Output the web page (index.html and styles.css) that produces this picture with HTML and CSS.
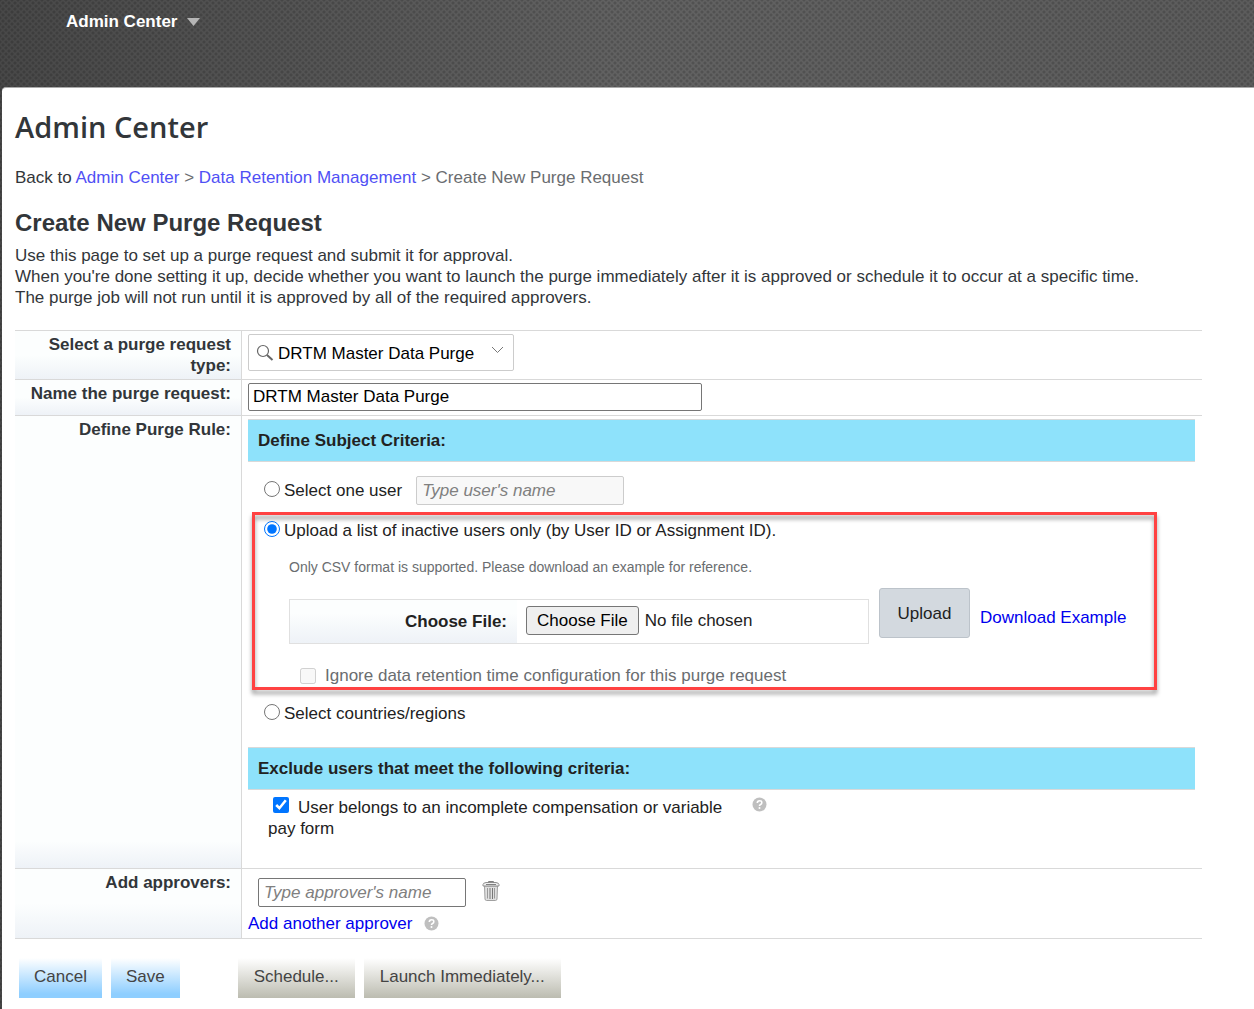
FILE: index.html
```html
<!DOCTYPE html>
<html lang="en">
<head>
<meta charset="utf-8">
<title>Create New Purge Request</title>
<link rel="stylesheet" href="styles.css">
</head>
<body>
<header class="topbar">
  <button type="button" class="module">Admin Center
    <svg width="13" height="8" viewBox="0 0 13 8" aria-hidden="true"><path d="M0 0h13L6.500 8z" fill="#b5b5b5"/></svg>
  </button>
</header>
<main class="panel">
  <h1>Admin Center</h1>
  <nav class="crumbs">Back to <a href="#">Admin Center</a> <span>&gt;</span> <a href="#">Data Retention Management</a> <span>&gt; Create New Purge Request</span></nav>
  <h2>Create New Purge Request</h2>
  <p class="intro">Use this page to set up a purge request and submit it for approval.<br>When you're done setting it up, decide whether you want to launch the purge immediately after it is approved or schedule it to occur at a specific time.<br>The purge job will not run until it is approved by all of the required approvers.</p>

  <form>
    <div class="form-row">
      <label class="caption" for="type">Select a purge request type:</label>
      <div class="field">
        <div class="combo">
          <svg width="18" height="18" viewBox="0 0 18 18" fill="none" stroke="#666" aria-hidden="true"><circle cx="7" cy="7" r="5.500" stroke-width="1.200"/><path d="M11 11l5.500 5" stroke-width="2"/></svg>
          <input id="type" type="text" value="DRTM Master Data Purge">
          <svg class="chevron" width="13" height="8" viewBox="0 0 13 8" fill="none" stroke="#777" aria-hidden="true"><path d="M1 1l5.500 5.500L12 1"/></svg>
        </div>
      </div>
    </div>
    <div class="form-row">
      <label class="caption" for="name">Name the purge request:</label>
      <div class="field"><input id="name" class="text name" type="text" value="DRTM Master Data Purge"></div>
    </div>
    <div class="form-row">
      <div class="caption">Define Purge Rule:</div>
      <div class="field rules">
        <h3>Define Subject Criteria:</h3>
        <div class="subjects">
          <div class="choice one-user">
            <label><input type="radio" name="subject">Select one user</label>
            <input class="text person" type="text" placeholder="Type user's name" aria-label="User's name" disabled>
          </div>
          <div class="upload">
            <div class="highlight"></div>
            <label class="choice"><input type="radio" name="subject" checked>Upload a list of inactive users only (by User ID or Assignment ID).</label>
            <p class="hint">Only CSV format is supported. Please download an example for reference.</p>
            <div class="file-line">
              <div class="file-box">
                <label for="file">Choose File:</label>
                <input id="file" type="file">
              </div>
              <button type="button" class="upload-btn">Upload</button>
              <a href="#">Download Example</a>
            </div>
            <label class="ignore"><input type="checkbox" disabled>Ignore data retention time configuration for this purge request</label>
          </div>
          <label class="choice"><input type="radio" name="subject">Select countries/regions</label>
        </div>
        <h3>Exclude users that meet the following criteria:</h3>
        <div class="exclude">
          <label><input type="checkbox" checked>User belongs to an incomplete compensation or variable pay form</label>
          <svg class="help" width="15" height="15" viewBox="0 0 15 15" aria-label="Help"><circle cx="7.500" cy="7.500" r="7" fill="#bfbfbf"/><path d="M5.300 6q0-2.300 2.300-2.300T9.800 5.700q0 1.200-1.200 1.700T7.500 9" fill="none" stroke="#fff" stroke-width="1.600"/><circle cx="7.500" cy="11" r="1" fill="#fff"/></svg>
        </div>
      </div>
    </div>
    <div class="form-row">
      <label class="caption" for="approver">Add approvers:</label>
      <div class="field approvers">
        <div class="approver-line">
          <input id="approver" class="text person" type="text" placeholder="Type approver's name">
          <button type="button" class="trash" aria-label="Remove approver">
            <svg width="18" height="20" viewBox="0 0 18 20" fill="none"><path d="M2.500 5l.5 13q.2 1.500 1.500 1.500h9q1.300 0 1.500-1.500l.5-13z" fill="#e0e0e0" stroke="#a0a0a0"/><path d="M5.500 7v10.500M12.500 7v10.500" stroke="#999"/><path d="M8 7v11M10.500 7v11" stroke="#777"/><path d="M1 3.500Q1 2 4 1.500h10q3 .5 3 2V5H1z" fill="#eee" stroke="#909090"/><path d="M6.500 1.500V.5h5v1M4 3.500h10" stroke="#808080"/></svg>
          </button>
        </div>
        <div class="add-line">
          <a href="#">Add another approver</a>
          <svg class="help" width="15" height="15" viewBox="0 0 15 15" aria-label="Help"><circle cx="7.500" cy="7.500" r="7" fill="#bfbfbf"/><path d="M5.300 6q0-2.300 2.300-2.300T9.800 5.700q0 1.200-1.200 1.700T7.500 9" fill="none" stroke="#fff" stroke-width="1.600"/><circle cx="7.500" cy="11" r="1" fill="#fff"/></svg>
        </div>
      </div>
    </div>
    <div class="actions">
      <button type="button" class="blue">Cancel</button>
      <button type="button" class="blue">Save</button>
      <button type="button" class="gray first">Schedule...</button>
      <button type="button" class="gray">Launch Immediately...</button>
    </div>
  </form>
</main>
</body>
</html>
```
FILE: styles.css
```css
* { box-sizing: border-box; }
body {
  margin: 0;
  padding-left: 2px;
  min-height: 100vh;
  display: flex;
  flex-direction: column;
  font: 17px/21px "Liberation Sans", Arial, sans-serif;
  color: #32363a;
  background-color: #484848;
  background-image:
    radial-gradient(circle, rgba(0, 0, 0, .16) 1px, transparent 2px),
    radial-gradient(circle, rgba(0, 0, 0, .16) 1px, transparent 2px),
    linear-gradient(90deg, #484848, #626262 50%, #5c5c5c);
  background-size: 6px 6px, 6px 6px, 100% 100%;
  background-position: 0 0, 3px 3px, 0 0;
}
input, button { font: inherit; color: inherit; margin: 0; }
a { color: #00e; text-decoration: none; }
.topbar { height: 87px; padding: 11px 64px; }
.module {
  display: flex;
  align-items: center;
  gap: 10px;
  padding: 0;
  border: 0;
  background: none;
  color: #fff;
  font-weight: 700;
}
.panel {
  flex: 1;
  padding: 22px 52px 11px 13px;
  background: #fff;
  border-top: 1px solid #aaa;
  border-top-left-radius: 4px;
}
h1 { margin: 0; font: 600 29px/34px "Open Sans", sans-serif; }
.crumbs { margin-top: 23px; }
.crumbs a { color: #5050f5; }
.crumbs span { color: #6a6d70; }
h2 { margin: 20px 0 8px; font-size: 24px; line-height: 29px; }
.intro { margin: 0 -40px 22px 0; }

.form-row {
  display: grid;
  grid-template-columns: 227px 1fr;
  border-top: 1px solid #d9d9d9;
}
.caption {
  padding: 3px 10px 3px 0;
  border-right: 1px solid #d9d9d9;
  font-weight: 700;
  text-align: right;
  background: linear-gradient(#fcfefe, #fcfefe 50%, #eef2f7);
}
.form-row:nth-child(3) .caption { background: linear-gradient(#fcfefe, #fcfefe 94%, #eef2f7); }
.field { padding: 3px 7px 4px 6px; min-width: 0; }
.combo {
  display: flex;
  align-items: center;
  width: 266px;
  height: 37px;
  margin-bottom: 4px;
  padding: 0 9px 0 7px;
  border: 1px solid #ccc;
  border-radius: 2px;
  color: #000;
}
.combo input { flex: 1; min-width: 0; padding: 2px 0 0 4px; border: 0; outline: 0; background: none; }
.chevron { margin-bottom: 6px; }
.text {
  display: block;
  height: 29px;
  padding: 0 5px;
  border: 1px solid #767676;
  border-radius: 2px;
  background: #fff;
}
.name { width: 454px; height: 28px; padding: 0 4px; color: #000; }
.person { width: 208px; }
.person::placeholder { color: #808080; font-style: italic; opacity: 1; }
.person:disabled { border-color: #ccc; background: #f8f8f8; }

.rules { color: #222; padding-bottom: 29px; }
h3 {
  margin: 0;
  padding: 10px;
  border: 1px solid #d9d9d9;
  border-width: 1px 0;
  background: #8ee2fb;
  font-size: 17px;
  line-height: 21px;
}
.subjects { padding: 14px 0 23px 16px; }
input[type="radio"], input[type="checkbox"] { width: 16px; height: 16px; }
.choice, .choice label { display: flex; align-items: center; gap: 4px; }
.choice input[type="radio"] { margin-bottom: 3px; }
.one-user { gap: 14px; }
.upload { position: relative; margin: 15px 0 17px; }
.highlight {
  position: absolute;
  inset: -8px 38px -4px -12px;
  border: 3px solid #ff4242;
  filter: drop-shadow(0 4px 2px rgba(0, 0, 0, .4));
  pointer-events: none;
}
.hint { margin: 16px 0 11px 25px; font-size: 14px; line-height: 20px; color: #6a6d70; }
.file-line { display: flex; align-items: flex-start; gap: 10px; margin-left: 25px; }
.file-line a { margin-top: 19px; }
.file-box {
  display: flex;
  width: 580px;
  margin-top: 11px;
  border: 1px solid #e0e0e0;
}
.file-box label {
  width: 227px;
  padding: 11px 10px;
  color: #222;
  font-weight: 700;
  text-align: right;
  background: linear-gradient(#fcfefe, #fcfefe 30%, #eef2f7);
}
.file-box input { flex: 1; min-width: 0; padding: 6px 9px; }
.file-box input::file-selector-button {
  height: 29px;
  margin: 0 6px 0 0;
  padding: 0 10px;
  border: 1px solid #767676;
  border-radius: 3px;
  background: #efefef;
  color: #000;
  font: inherit;
}
.upload-btn {
  width: 91px;
  height: 50px;
  border: 1px solid #bcc3ca;
  border-radius: 3px;
  background: #d3d9df;
}
.ignore { display: flex; align-items: center; gap: 9px; margin: 21px 0 0 36px; color: #6a6d70; }
.exclude { display: flex; gap: 4px; padding: 7px 0 0 20px; }
.exclude label { width: 480px; }
.exclude input { margin: 0 9px 0 5px; }

.approvers { padding: 9px 7px 4px 6px; }
.approver-line { display: flex; align-items: flex-start; gap: 16px; padding-left: 10px; }
.trash { display: flex; padding: 3px 0; border: 0; background: none; }
.add-line { display: flex; align-items: center; gap: 12px; margin-top: 6px; }
.actions {
  display: flex;
  gap: 9px;
  padding: 19px 4px 0;
  border-top: 1px solid #d9d9d9;
}
.actions button { height: 40px; padding: 0 15px 3px; border: 0; color: #444; }
.actions .gray { padding: 0 16px 3px; }
.blue { background: linear-gradient(#fff, #8eceff 90%); }
.gray { background: linear-gradient(#fff, #bcbcb0); }
.actions .first { margin-left: 49px; }
```
